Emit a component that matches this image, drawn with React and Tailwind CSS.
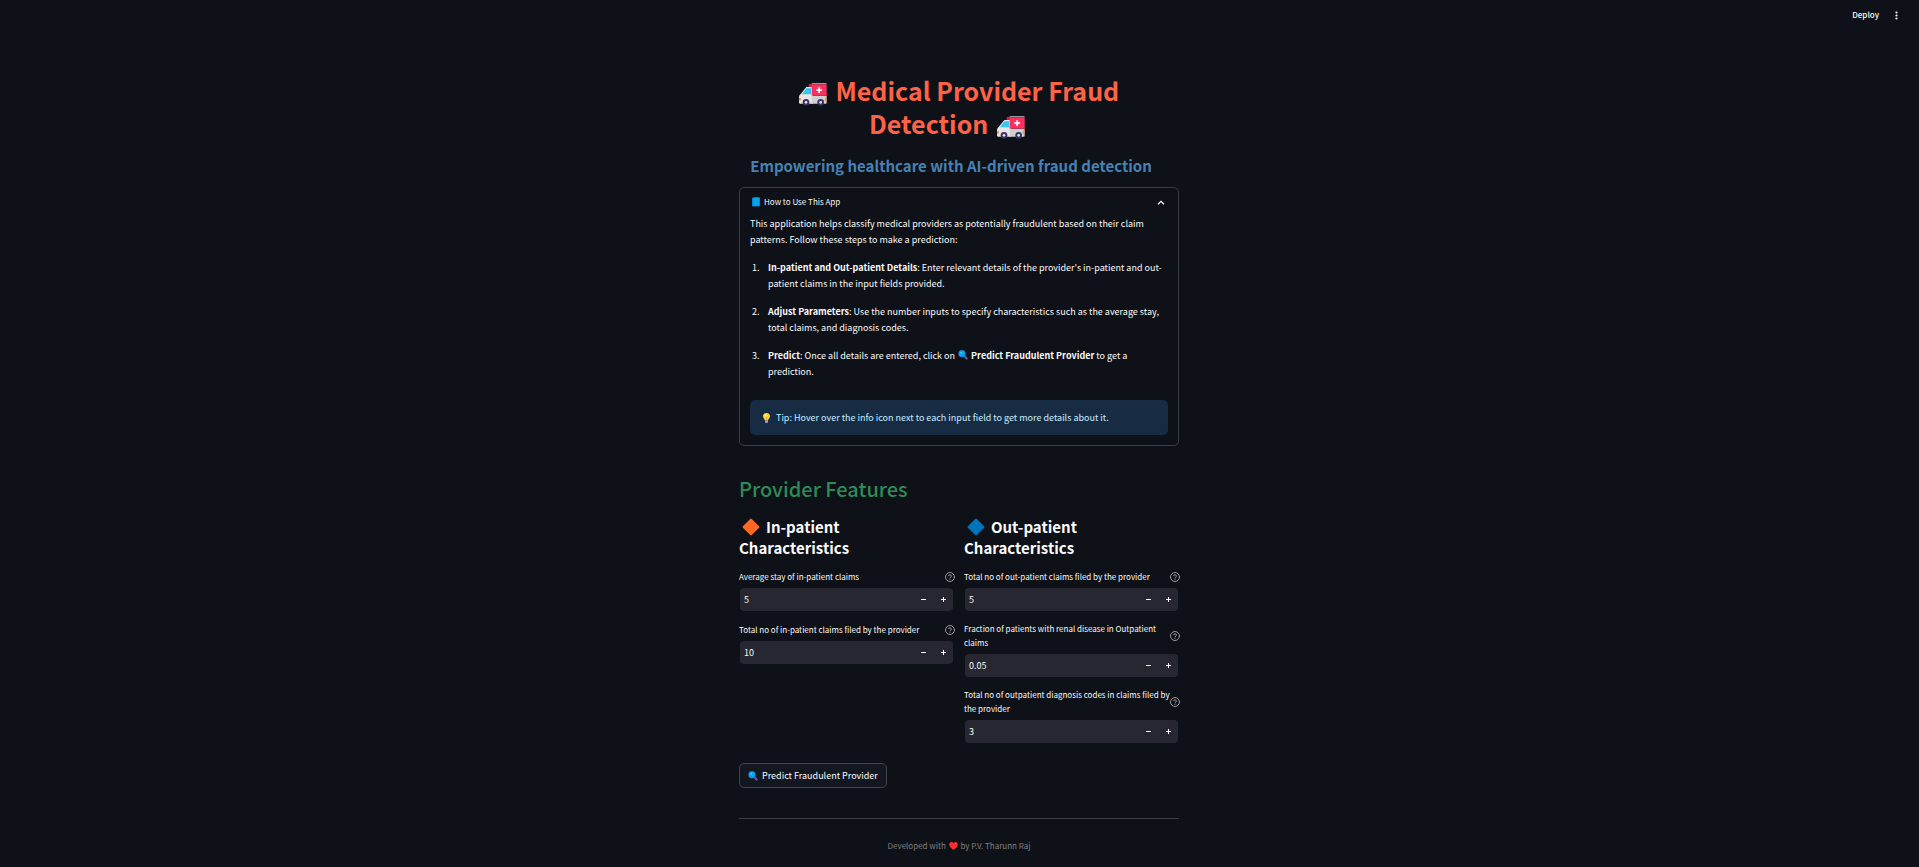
import { useState } from "react";

function Ambulance() {
  return (
    <svg viewBox="0 0 84 69" className="inline-block h-[23px] w-7 align-[-5px]" aria-hidden="true">
      <path d="M29 6q0-4 4-4h8v10h-12z" fill="#c9203f" />
      <path d="M22 12h20v50H3q-3 0-3-4V42q0-6 5-9z" fill="#e6e6e6" />
      <path d="M22 16h14v18H9z" fill="#35c5f5" />
      <path d="M38 38h45v21q0 3-3 3H38z" fill="#cfcfcf" />
      <path d="M41 0h39q3 0 3 4H38q0-4 3-4z" fill="#9b9b9b" />
      <path d="M38 4h45v34H38z" fill="#fb2f60" />
      <path d="M58 13h5v6h6v5h-6v6h-5v-6h-6v-5h6z" fill="#fff" />
      <path d="M0 45h3q3 0 3 4t-3 4H0zM80 43h3v11h-3q-2 0-2-5t2-6z" fill="#f9873a" />
      <circle cx="21" cy="58" r="10" fill="#3b3462" />
      <circle cx="21" cy="58" r="4" fill="#e8e6ee" />
      <circle cx="65" cy="58" r="10" fill="#3b3462" />
      <circle cx="65" cy="58" r="4" fill="#e8e6ee" />
    </svg>
  );
}

function Book() {
  return (
    <svg viewBox="0 0 8 10" className="h-[10px] w-2" aria-hidden="true">
      <rect x="0" y="0.5" width="7.6" height="9" rx="0.8" fill="#0b86cf" />
      <rect x="1.4" y="0.5" width="6.2" height="8.2" rx="0.5" fill="#06a5ee" />
    </svg>
  );
}

function Magnifier() {
  return (
    <svg viewBox="0 0 30 30" className="inline-block h-[10px] w-[10px] align-[-1px]" aria-hidden="true">
      <path d="M17 20l4-4 8 8q1 5-4 5z" fill="#6b5a9c" />
      <circle cx="12" cy="11" r="11" fill="#1479bf" />
      <circle cx="12" cy="11" r="9" fill="#08a4f0" />
      <circle cx="10" cy="8" r="3" fill="#4cc3fa" />
    </svg>
  );
}

function Bulb() {
  return (
    <svg viewBox="0 0 21 30" className="h-[10px] w-[7px]" aria-hidden="true">
      <path d="M10.500 0C4 0 0 4.500 0 10c0 5 4 7 6 12h9c2-5 6-7 6-12 0-5.500-4-10-10.500-10z" fill="#fcd53f" />
      <path d="M8 11h5l-1 11H9z" fill="#f5a623" />
      <path d="M6 22h9v5q0 3-4.500 3T6 27z" fill="#a9a6b5" />
      <circle cx="7" cy="7" r="3" fill="#fff1a0" />
    </svg>
  );
}

function Heart() {
  return (
    <svg viewBox="0 0 28 26" className="mx-px inline-block h-2 w-[9px] align-[-1px]" aria-hidden="true">
      <path d="M14 26C7 21 0 15 0 8c0-8 10-11 14-4 4-7 14-4 14 4 0 7-7 13-14 18z" fill="#f8312f" />
    </svg>
  );
}

function Diamond({ color }) {
  return (
    <svg viewBox="0 0 18 18" className="ml-[3px] mr-[6px] inline-block h-[18px] w-[18px] align-[-3px]" aria-hidden="true">
      <path d="M8.200.900q.8-.8 1.600 0l7.300 7.300q.8.800 0 1.600l-7.300 7.300q-.8.800-1.600 0L.900 9.800q-.8-.8 0-1.600z" fill={color} />
    </svg>
  );
}

function HelpIcon() {
  return (
    <svg viewBox="0 0 24 24" className="h-[10px] w-[10px]" fill="none" stroke="#a3a5a9" strokeWidth="2.200" strokeLinecap="round" strokeLinejoin="round" aria-hidden="true">
      <circle cx="12" cy="12" r="10.800" />
      <path d="M8.600 9a3.500 3.500 0 0 1 6.800 1c0 2.300-3.400 2.600-3.400 4.500M12 18h.01" />
    </svg>
  );
}

function NumberField({ id, label, initial, step = 1 }) {
  const [value, setValue] = useState(initial);
  const change = (by) => setValue((v) => String(Number((Number(v) + by).toFixed(2))));
  return (
    <div>
      <div className="mb-1 flex min-h-[15px] items-center justify-between">
        <label htmlFor={id} className="-mr-1 text-[8px] leading-[14px]">{label}</label>
        <button type="button" aria-label={"Help: " + label} className="-mr-px shrink-0">
          <HelpIcon />
        </button>
      </div>
      <div className="mx-px flex h-[23px] items-stretch overflow-hidden rounded bg-[#262730]">
        <input
          id={id}
          type="number"
          step={step}
          value={value}
          onChange={(e) => setValue(e.target.value)}
          className="min-w-0 flex-1 bg-transparent pl-1 text-[9px] leading-4 outline-none [appearance:textfield] [&::-webkit-inner-spin-button]:appearance-none"
        />
        <button type="button" aria-label="Decrease" onClick={() => change(-step)} className="flex w-5 items-center justify-center">
          <svg viewBox="0 0 5 5" className="h-[5px] w-[5px]" shapeRendering="crispEdges"><path d="M0 2h5v1H0z" fill="#fafafa" /></svg>
        </button>
        <button type="button" aria-label="Increase" onClick={() => change(step)} className="flex w-5 items-center justify-center">
          <svg viewBox="0 0 5 5" className="h-[5px] w-[5px]" shapeRendering="crispEdges"><path d="M0 2h5v1H0zM2 0h1v5H2z" fill="#fafafa" /></svg>
        </button>
      </div>
    </div>
  );
}

function Step({ number, children }) {
  return (
    <li className="flex">
      <span className="w-4 shrink-0">{number}.</span>
      <div>{children}</div>
    </li>
  );
}

export default function App() {
  const [open, setOpen] = useState(true);
  return (
    <div className="min-h-screen bg-[#0e1117] pr-px font-['Noto_Sans_CJK_SC','Source_Sans_Pro',sans-serif] text-[#fafafa]">
      <header className="flex h-[30px] items-center justify-end gap-4 pr-5">
        <button type="button" className="text-[8px] font-medium leading-4">Deploy</button>
        <button type="button" aria-label="Main menu">
          <svg viewBox="0 0 3 9" className="h-[9px] w-[3px]" fill="#fafafa"><circle cx="1.500" cy="1.500" r="1.100" /><circle cx="1.500" cy="4.500" r="1.100" /><circle cx="1.500" cy="7.500" r="1.100" /></svg>
        </button>
      </header>

      <main className="mx-auto w-full max-w-[440px] pt-11">
        <h1 id="title" className="text-center text-[25px] font-bold leading-[33px] text-[#ff6347]">
          <Ambulance /> <span className="ml-[3px]">Medical Provider Fraud</span><br />
          Detection <span className="ml-[3px]"><Ambulance /></span>
          <a href="#title" aria-label="Link to title" className="inline-block w-6" />
        </h1>
        <h3 id="subtitle" className="mt-[15px] whitespace-nowrap text-center text-[15px] font-bold leading-[21px] text-[#4682b4]">
          Empowering healthcare with AI-driven fraud detection
          <a href="#subtitle" aria-label="Link to subtitle" className="inline-block w-4" />
        </h3>

        <section className="mt-[11px] rounded-[5px] border border-[#3b3d43]">
          <button type="button" aria-expanded={open} onClick={() => setOpen(!open)} className="flex h-7 w-full items-center gap-1 px-3 text-[8px] leading-[14px]">
            <Book />
            How to Use This App
            <svg viewBox="0 0 8 5" className="ml-auto mr-px h-[5px] w-2" fill="none" stroke="#fafafa" strokeWidth="1.300"><path d="M1 4.300l3-3 3 3" /></svg>
          </button>
          {open && (
            <div className="px-[10px] pb-[10px] text-[9px] leading-4">
              <p>This application helps classify medical providers as potentially fraudulent based on their claim patterns. Follow these steps to make a prediction:</p>
              <ol className="mt-3 space-y-3 pl-[2px]">
                <Step number={1}><strong>In-patient and Out-patient Details</strong>: Enter relevant details of the provider's in-patient and out-patient claims in the input fields provided.</Step>
                <Step number={2}><strong>Adjust Parameters</strong>: Use the number inputs to specify characteristics such as the average stay, total claims, and diagnosis codes.</Step>
                <Step number={3}><strong>Predict</strong>: Once all details are entered, click on <span className="mx-px"><Magnifier /></span> <strong>Predict Fraudulent Provider</strong> to get a prediction.</Step>
              </ol>
              <p className="mt-5 flex h-[35px] items-center gap-[6px] rounded-[5px] bg-[#172c43] px-[13px] text-[#c7ebff]">
                <Bulb />
                Tip: Hover over the info icon next to each input field to get more details about it.
              </p>
            </div>
          )}
        </section>

        <h2 className="mt-[29px] text-[20px] font-medium leading-[27px] text-[#2e8b57]">Provider Features</h2>

        <div className="mt-[14px] grid grid-cols-2 gap-[10px]">
          <section className="flex flex-col gap-[11px]">
            <h3 className="text-[15px] font-bold leading-[21px]"><Diamond color="#ff6723" />In-patient<br />Characteristics</h3>
            <NumberField id="stay" label="Average stay of in-patient claims" initial="5" />
            <NumberField id="in-claims" label="Total no of in-patient claims filed by the provider" initial="10" />
          </section>
          <section className="flex flex-col gap-[11px]">
            <h3 className="text-[15px] font-bold leading-[21px]"><Diamond color="#0074ba" />Out-patient<br />Characteristics</h3>
            <NumberField id="out-claims" label="Total no of out-patient claims filed by the provider" initial="5" />
            <NumberField id="renal" label="Fraction of patients with renal disease in Outpatient claims" initial="0.05" step={0.01} />
            <NumberField id="codes" label="Total no of outpatient diagnosis codes in claims filed by the provider" initial="3" />
          </section>
        </div>

        <button type="button" className="mt-5 flex h-[25px] items-center gap-1 rounded-[5px] border border-[#41444c] bg-[#131720] px-2 text-[9px] leading-4">
          <Magnifier />
          Predict Fraudulent Provider
        </button>

        <hr className="mt-[30px] border-[#3b3d43]" />
        <footer className="mt-[19px] pb-2 text-center text-[8px] leading-4 text-[#808080]">
          Developed with <Heart /> by P.V. Tharunn Raj
        </footer>
      </main>
    </div>
  );
}
